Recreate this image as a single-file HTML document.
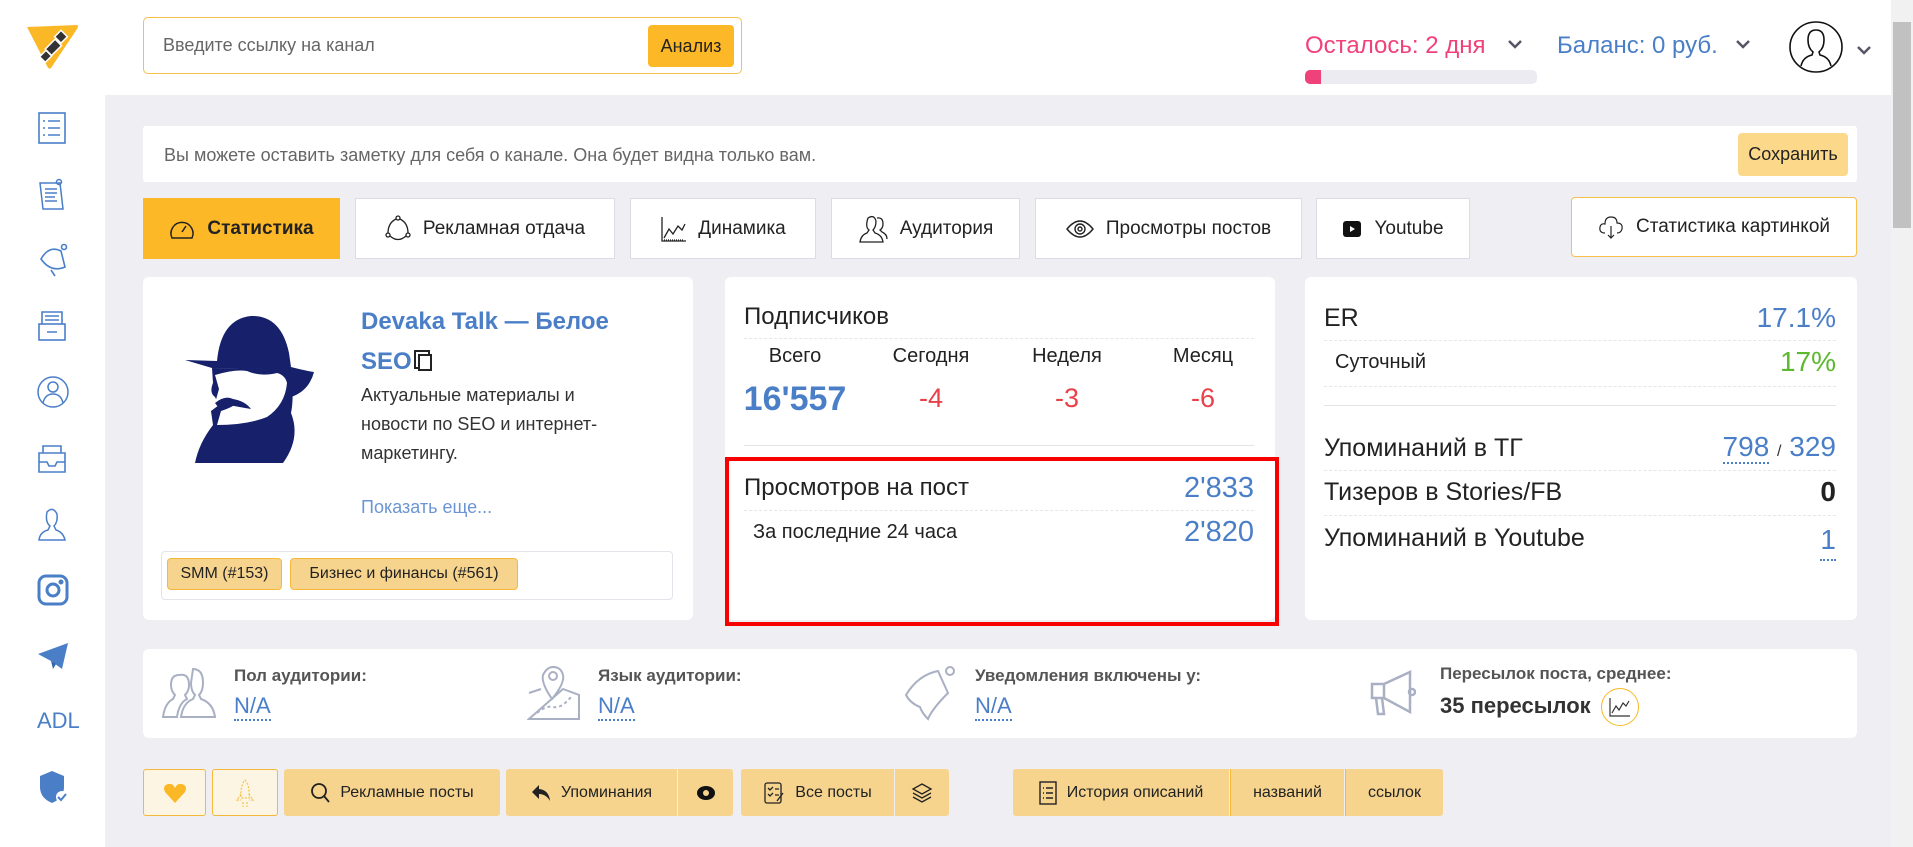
<!DOCTYPE html>
<html><head><meta charset="utf-8">
<style>
*{box-sizing:border-box;margin:0;padding:0}
body{width:1913px;height:847px;overflow:hidden;background:#eeeef3;font-family:"Liberation Sans",sans-serif;position:relative;color:#222}
.a{position:absolute}
.card{position:absolute;background:#fff;border-radius:6px}
.tab{position:absolute;top:198px;height:61px;background:#fff;border:1px solid #dcdce6;display:flex;align-items:center;justify-content:center;font-size:19px;color:#222;gap:12px}
.blue{color:#4a7fc8}
.red{color:#e8414a}
.dot{position:absolute;height:0;border-top:1px dashed #e6e6ea}
.btn{position:absolute;top:769px;height:47px;background:#f6d48e;display:flex;align-items:center;justify-content:center;font-size:16px;color:#222;gap:10px;border-radius:3px}
.lbl{font-size:17px;font-weight:bold;color:#555}
.na{font-size:22px;color:#4a7fc8;border-bottom:2px dotted #4a7fc8;display:inline-block;line-height:26px}
.si{position:absolute;left:37px}
</style></head><body>
<!-- sidebar -->
<div class="a" style="left:0;top:0;width:105px;height:847px;background:#fff"></div>
<svg class="a" style="left:25px;top:22px" width="55" height="50" viewBox="0 0 55 50"><path d="M2 5 L52 3 Q54 4 52 7 L26 46 Q24 48 22 44 Z" fill="#fbb826"/><g fill="#333" stroke="#fff" stroke-width="1.5"><rect x="32" y="10" width="9" height="9" transform="rotate(45 36 14)"/><rect x="24" y="18" width="9" height="14" transform="rotate(45 28 25)"/><rect x="17" y="30" width="8" height="9" transform="rotate(45 21 34)"/></g></svg>
<svg class="si" style="top:112px" width="30" height="32" viewBox="0 0 30 32" fill="none" stroke="#4a7fc8" stroke-width="1.6"><rect x="2" y="1" width="26" height="30"/><path d="M6 9h2M11 9h12M6 16h2M11 16h12M6 23h2M11 23h12"/></svg>
<svg class="si" style="top:178px" width="30" height="34" viewBox="0 0 30 34" fill="none" stroke="#4a7fc8" stroke-width="1.5"><path d="M3 5h20l3 26H6z"/><path d="M8 11h12M8 15h12M8 19h10M8 23h12"/><circle cx="22" cy="4" r="2.5"/></svg>
<svg class="si" style="top:243px" width="32" height="34" viewBox="0 0 32 34" fill="none" stroke="#4a7fc8" stroke-width="1.6"><path d="M4 16 Q12 2 24 8 L28 24 Q14 30 4 16Z"/><path d="M14 27 L18 33"/><circle cx="27" cy="4" r="2.5"/></svg>
<svg class="si" style="top:310px" width="30" height="32" viewBox="0 0 30 32" fill="none" stroke="#4a7fc8" stroke-width="1.6"><rect x="2" y="14" width="26" height="16"/><path d="M5 14V2h20v12M8 6h14M8 10h14M10 22h10"/></svg>
<svg class="si" style="top:375px" width="32" height="34" viewBox="0 0 32 34" fill="none" stroke="#4a7fc8" stroke-width="1.5"><circle cx="16" cy="17" r="15"/><circle cx="16" cy="12" r="5"/><path d="M6 28 Q8 19 16 19 Q24 19 26 28"/></svg>
<svg class="si" style="top:444px" width="30" height="30" viewBox="0 0 30 30" fill="none" stroke="#4a7fc8" stroke-width="1.6"><path d="M2 9h26v19H2z"/><path d="M2 18h8l2 4h6l2-4h8M6 9V2h18v7"/></svg>
<svg class="si" style="top:508px" width="30" height="34" viewBox="0 0 30 34" fill="none" stroke="#4a7fc8" stroke-width="1.5"><path d="M10 4 Q16 -2 20 6 Q21 14 17 18 L19 22 Q26 24 28 32 H2 Q3 24 11 22 L13 18 Q8 14 10 4Z"/></svg>
<svg class="si" style="top:574px" width="32" height="32" viewBox="0 0 32 32" fill="none" stroke="#4a7fc8" stroke-width="3"><rect x="2" y="2" width="28" height="28" rx="7"/><circle cx="16" cy="16" r="6"/><circle cx="24" cy="8" r="1" fill="#4a7fc8"/></svg>
<svg class="si" style="top:642px" width="32" height="28" viewBox="0 0 32 28"><path d="M1 12 L31 1 L25 27 L14 19 Z" fill="#4a7fc8"/><path d="M14 19 L16 27 L19 22" fill="#3766a8"/></svg>
<div class="a" style="left:37px;top:708px;font-size:22px;color:#4a7fc8">ADL</div>
<svg class="si" style="top:770px" width="34" height="34" viewBox="0 0 34 34"><path d="M3 6 L15 1 L27 6 V17 Q27 28 15 33 Q3 28 3 17Z" fill="#4a7fc8"/><circle cx="25" cy="27" r="6" fill="#fff"/><path d="M21 27l3 3 5-6" stroke="#4a7fc8" stroke-width="2" fill="none"/></svg>

<!-- header -->
<div class="a" style="left:105px;top:0;width:1786px;height:95px;background:#fff"></div>
<div class="a" style="left:1891px;top:0;width:22px;height:847px;background:#f1f1f1"></div>
<div class="a" style="left:1893px;top:22px;width:18px;height:206px;background:#c1c1c1"></div>
<div class="a" style="left:143px;top:17px;width:599px;height:57px;border:1px solid #f7c04a;border-radius:5px"></div>
<div class="a" style="left:163px;top:35px;font-size:18px;color:#666">Введите ссылку на канал</div>
<div class="a" style="left:648px;top:25px;width:86px;height:42px;background:#fdb827;border-radius:4px;font-size:18px;display:flex;align-items:center;justify-content:center">Анализ</div>
<div class="a" style="left:1305px;top:32px;font-size:24px;color:#f0427a">Осталось: 2 дня</div>
<div class="a" style="left:1305px;top:70px;width:232px;height:14px;background:#ebebf1;border-radius:5px"></div>
<div class="a" style="left:1305px;top:70px;width:16px;height:14px;background:#f0427a;border-radius:5px 0 0 5px"></div>
<div class="a" style="left:1557px;top:32px;font-size:24px;color:#4a7fc8">Баланс: 0 руб.</div>
<svg class="a" style="left:1507px;top:38px" width="16" height="12"><path d="M2 3l6 6 6-6" stroke="#556" stroke-width="2.5" fill="none"/></svg>
<svg class="a" style="left:1735px;top:38px" width="16" height="12"><path d="M2 3l6 6 6-6" stroke="#556" stroke-width="2.5" fill="none"/></svg>
<svg class="a" style="left:1788px;top:20px" width="56" height="54" viewBox="0 0 56 54" fill="none" stroke="#111" stroke-width="1.6"><ellipse cx="28" cy="27" rx="26" ry="25"/><path d="M28 10 Q20 10 20 20 Q20 28 25 32 L24 35 Q15 37 13 46 M28 10 Q36 10 36 20 Q36 28 31 32 L32 35 Q41 37 43 46"/></svg>
<svg class="a" style="left:1856px;top:44px" width="16" height="12"><path d="M2 3l6 6 6-6" stroke="#556" stroke-width="2.5" fill="none"/></svg>

<!-- note -->
<div class="card" style="left:143px;top:126px;width:1714px;height:56px;border-radius:3px"></div>
<div class="a" style="left:164px;top:145px;font-size:18px;color:#666">Вы можете оставить заметку для себя о канале. Она будет видна только вам.</div>
<div class="a" style="left:1738px;top:133px;width:110px;height:43px;background:#fcd98a;border-radius:4px;font-size:18px;display:flex;align-items:center;justify-content:center">Сохранить</div>

<!-- tabs -->
<div class="tab" style="left:143px;width:197px;background:#fdb827;border-color:#fdb827;font-weight:bold">
<svg width="26" height="24" viewBox="0 0 26 24" fill="none" stroke="#222" stroke-width="1.5"><path d="M3 21 A11 11 0 1 1 23 21Z"/><path d="M13 15l4-6"/></svg>Статистика</div>
<div class="tab" style="left:355px;width:260px"><svg width="26" height="28" viewBox="0 0 26 28" fill="none" stroke="#222" stroke-width="1.3"><circle cx="13" cy="3" r="2"/><circle cx="3" cy="20" r="2"/><circle cx="23" cy="20" r="2"/><path d="M11 4 Q3 8 3 18M15 4 Q23 8 23 18M5 21 Q13 28 21 21"/></svg>Рекламная отдача</div>
<div class="tab" style="left:630px;width:186px"><svg width="26" height="26" viewBox="0 0 26 26" fill="none" stroke="#222" stroke-width="1.3"><path d="M2 1v24h24M4 22l5-9 4 5 5-8 4 4 3-6"/><path d="M4 24h20" stroke-dasharray="1 1"/></svg>Динамика</div>
<div class="tab" style="left:831px;width:189px"><svg width="30" height="28" viewBox="0 0 30 28" fill="none" stroke="#222" stroke-width="1.3"><path d="M10 3 Q16 -1 18 6 Q18 12 15 15 L17 18 Q24 20 25 27 H2 Q3 20 9 18 L11 15 Q7 12 10 3Z"/><path d="M19 3 Q25 2 25 9 Q25 13 22 15 L24 17 Q29 19 29 24"/></svg>Аудитория</div>
<div class="tab" style="left:1035px;width:267px"><svg width="28" height="20" viewBox="0 0 28 20" fill="none" stroke="#222" stroke-width="1.4"><path d="M1 10 Q14 -6 27 10 Q14 26 1 10Z"/><circle cx="14" cy="10" r="5"/><circle cx="14" cy="10" r="2"/></svg>Просмотры постов</div>
<div class="tab" style="left:1316px;width:154px"><svg width="20" height="18" viewBox="0 0 20 18"><rect x="1" y="1" width="18" height="16" rx="3" fill="#111"/><path d="M8 6l5 3-5 3z" fill="#fff"/></svg>Youtube</div>
<div class="tab" style="left:1571px;width:286px;border:1px solid #f7c04a;border-radius:4px;top:197px;height:60px"><svg width="26" height="26" viewBox="0 0 26 26" fill="none" stroke="#222" stroke-width="1.2"><path d="M7 19 Q1 19 2 13 Q3 9 7 10 Q7 3 13 3 Q19 3 19 9 Q25 9 24 15 Q23 19 19 19"/><path d="M13 12v12M10 21l3 3 3-3"/></svg>Статистика картинкой</div>

<!-- card1 -->
<div class="card" style="left:143px;top:277px;width:550px;height:343px"></div>
<svg class="a" style="left:185px;top:313px" width="132" height="152" viewBox="0 0 132 152">
<path d="M0 47 L32 48 Q36 6 66 3 Q96 2 104 40 L106 54 Q122 58 129 59 Q124 78 106 84 L104 70 Q96 56 80 56 L27 55 Z" fill="#16206b"/>
<path d="M27 55 L104 56 Q110 80 106 100 Q116 125 98 150 L10 150 Q14 130 28 112 L26 98 L34 92 L30 84 Q24 80 28 70 Z" fill="#16206b"/>
<path d="M30 62 Q50 56 62 58 Q75 64 92 60 Q100 62 102 70 Q100 92 82 104 Q62 112 32 112 L36 98 Q48 94 52 90 L44 90 Q38 86 30 90 L34 76 Z" fill="#fff"/>
<path d="M30 90 Q40 82 48 86 Q60 88 66 96 Q54 94 44 92 L36 98Z" fill="#16206b"/>
</svg>
<div class="a" style="left:361px;top:302px;font-size:24px;font-weight:bold;color:#4a7fc8;line-height:40px;width:300px">Devaka Talk — Белое<br>SEO <span style="display:inline-block;width:14px;height:17px;border:2px solid #222;vertical-align:-2px;box-shadow:-3px -3px 0 -1px #fff,-3px -3px 0 1px #222"></span></div>
<div class="a" style="left:361px;top:381px;font-size:18px;color:#333;line-height:29px">Актуальные материалы и<br>новости по SEO и интернет-<br>маркетингу.</div>
<div class="a" style="left:361px;top:497px;font-size:18px;color:#6b95d4">Показать еще...</div>
<div class="a" style="left:161px;top:551px;width:512px;height:49px;border:1px solid #e3e3ea;border-radius:4px"></div>
<div class="a" style="left:167px;top:558px;width:115px;height:32px;background:#f6d48e;border:1px solid #f5b83a;border-radius:4px;font-size:16px;display:flex;align-items:center;justify-content:center">SMM (#153)</div>
<div class="a" style="left:290px;top:558px;width:228px;height:32px;background:#f6d48e;border:1px solid #f5b83a;border-radius:4px;font-size:16px;display:flex;align-items:center;justify-content:center">Бизнес и финансы (#561)</div>

<!-- card2 -->
<div class="card" style="left:725px;top:277px;width:550px;height:343px"></div>
<div class="a" style="left:744px;top:303px;font-size:24px">Подписчиков</div>
<div class="dot" style="left:744px;top:338px;width:510px"></div>
<div class="a" style="left:745px;top:345px;width:100px;text-align:center;font-size:20px">Всего</div>
<div class="a" style="left:881px;top:345px;width:100px;text-align:center;font-size:20px">Сегодня</div>
<div class="a" style="left:1017px;top:345px;width:100px;text-align:center;font-size:20px">Неделя</div>
<div class="a" style="left:1153px;top:345px;width:100px;text-align:center;font-size:20px">Месяц</div>
<div class="a blue" style="left:730px;top:380px;width:130px;text-align:center;font-size:34px;font-weight:bold">16'557</div>
<div class="a red" style="left:881px;top:383px;width:100px;text-align:center;font-size:27px">-4</div>
<div class="a red" style="left:1017px;top:383px;width:100px;text-align:center;font-size:27px">-3</div>
<div class="a red" style="left:1153px;top:383px;width:100px;text-align:center;font-size:27px">-6</div>
<div class="a" style="left:744px;top:445px;width:510px;height:1px;background:#e3e3e8"></div>
<div class="a" style="left:725px;top:457px;width:554px;height:169px;border:4px solid #f70000"></div>
<div class="a" style="left:744px;top:474px;font-size:24px">Просмотров на пост</div>
<div class="a blue" style="left:1100px;top:472px;width:154px;text-align:right;font-size:29px">2'833</div>
<div class="dot" style="left:744px;top:510px;width:510px"></div>
<div class="a" style="left:753px;top:521px;font-size:20px">За последние 24 часа</div>
<div class="a blue" style="left:1100px;top:516px;width:154px;text-align:right;font-size:29px">2'820</div>

<!-- card3 -->
<div class="card" style="left:1305px;top:277px;width:552px;height:343px"></div>
<div class="a" style="left:1324px;top:304px;font-size:25px">ER</div>
<div class="a blue" style="left:1700px;top:302px;width:136px;text-align:right;font-size:28px">17.1%</div>
<div class="dot" style="left:1324px;top:340px;width:512px"></div>
<div class="a" style="left:1335px;top:351px;font-size:20px">Суточный</div>
<div class="a" style="left:1700px;top:346px;width:136px;text-align:right;font-size:28px;color:#5cb82e">17%</div>
<div class="dot" style="left:1324px;top:386px;width:512px"></div>
<div class="a" style="left:1324px;top:405px;width:512px;height:1px;background:#e3e3e8"></div>
<div class="a" style="left:1324px;top:434px;font-size:25px">Упоминаний в ТГ</div>
<div class="a blue" style="left:1600px;top:431px;width:236px;text-align:right;font-size:28px"><span style="border-bottom:2px dotted #4a7fc8">798</span> <span style="font-size:16px;color:#333">/</span> 329</div>
<div class="dot" style="left:1324px;top:470px;width:512px"></div>
<div class="a" style="left:1324px;top:478px;font-size:25px">Тизеров в Stories/FB</div>
<div class="a" style="left:1700px;top:476px;width:136px;text-align:right;font-size:28px;font-weight:bold">0</div>
<div class="dot" style="left:1324px;top:515px;width:512px"></div>
<div class="a" style="left:1324px;top:524px;font-size:25px">Упоминаний в Youtube</div>
<div class="a blue" style="left:1700px;top:521px;width:136px;text-align:right;font-size:28px"><span style="border-bottom:2px dotted #4a7fc8;line-height:38px;display:inline-block">1</span></div>

<!-- info strip -->
<div class="card" style="left:143px;top:649px;width:1714px;height:89px"></div>
<svg class="a" style="left:161px;top:667px" width="56" height="52" viewBox="0 0 56 52" fill="none" stroke="#aab0c4" stroke-width="2"><path d="M32 2 Q42 2 42 16 Q42 24 38 28 L40 32 Q52 36 54 50 H20 Q22 36 32 32 L34 28 Q30 24 30 16Z" /><path d="M18 8 Q28 6 28 18 Q28 24 24 28 L26 32 Q18 36 16 50 H2 Q4 36 12 32 L14 28 Q10 24 10 18 Q10 8 18 8Z"/></svg>
<div class="a lbl" style="left:234px;top:666px">Пол аудитории:</div>
<div class="a" style="left:234px;top:693px"><span class="na">N/A</span></div>
<svg class="a" style="left:527px;top:665px" width="54" height="55" viewBox="0 0 54 55" fill="none" stroke="#aab0c4" stroke-width="2"><path d="M2 28 L14 24 M36 24 L52 30 V54 H2 Z"/><path d="M25 34 Q14 18 16 10 Q20 2 26 2 Q34 2 36 10 Q38 18 25 34Z"/><circle cx="26" cy="11" r="4"/><path d="M10 48 Q20 40 26 42 Q34 44 44 32" stroke-dasharray="3 3"/></svg>
<div class="a lbl" style="left:598px;top:666px">Язык аудитории:</div>
<div class="a" style="left:598px;top:693px"><span class="na">N/A</span></div>
<svg class="a" style="left:902px;top:665px" width="54" height="56" viewBox="0 0 54 56" fill="none" stroke="#aab0c4" stroke-width="2"><path d="M4 30 Q16 10 36 6 L46 28 Q30 44 26 54 Q20 48 18 42 Q8 38 4 30Z"/><circle cx="48" cy="6" r="4"/></svg>
<div class="a lbl" style="left:975px;top:666px">Уведомления включены у:</div>
<div class="a" style="left:975px;top:693px"><span class="na">N/A</span></div>
<svg class="a" style="left:1370px;top:670px" width="46" height="46" viewBox="0 0 46 46" fill="none" stroke="#aab0c4" stroke-width="2.5"><path d="M2 14h12v14H2z M14 14 L40 2 V42 L14 28"/><path d="M6 28 L8 44h6l-2-16"/><circle cx="42" cy="22" r="3"/></svg>
<div class="a lbl" style="left:1440px;top:664px">Пересылок поста, среднее:</div>
<div class="a" style="left:1440px;top:693px;font-size:22px;font-weight:bold;color:#333">35 пересылок</div>
<div class="a" style="left:1601px;top:688px;width:38px;height:38px;border:1px solid #fbb826;border-radius:50%;display:flex;align-items:center;justify-content:center"><svg width="22" height="20" viewBox="0 0 22 20" fill="none" stroke="#333" stroke-width="1.2"><path d="M1 1v18h20M3 16l4-7 3 4 4-7 3 3 3-5"/></svg></div>

<!-- bottom buttons -->
<div class="btn" style="left:143px;width:63px;background:#fdf5e3;border:1px solid #f5b83a"><svg width="24" height="22" viewBox="0 0 24 22"><path d="M12 21 L2 10 Q-1 4 5 2 Q10 1 12 6 Q14 1 19 2 Q25 4 22 10Z" fill="#fbb826"/></svg></div>
<div class="btn" style="left:212px;width:66px;background:#fdf5e3;border:1px solid #f5b83a"><svg width="22" height="30" viewBox="0 0 22 30" fill="none" stroke="#f5c04a" stroke-width="1.2" stroke-dasharray="2 1.5"><path d="M11 2 Q16 8 15 20 H7 Q6 8 11 2Z M7 16 L3 22 H7 M15 16 L19 22 H15 M9 24v5M13 24v5"/></svg></div>
<div class="btn" style="left:284px;width:216px"><svg width="20" height="22" viewBox="0 0 20 22" fill="none" stroke="#222" stroke-width="1.8"><circle cx="9" cy="9" r="7"/><path d="M14 14l5 6"/></svg>Рекламные посты</div>
<div class="btn" style="left:506px;width:171px;border-radius:3px 0 0 3px"><svg width="20" height="18" viewBox="0 0 20 18"><path d="M8 1 L1 8 L8 15 V10 Q15 10 19 17 Q18 6 8 5Z" fill="#222"/></svg>Упоминания</div>
<div class="btn" style="left:678px;width:55px;border-radius:0 3px 3px 0"><svg width="20" height="16" viewBox="0 0 20 16"><ellipse cx="10" cy="8" rx="9" ry="7" fill="#111"/><circle cx="10" cy="8" r="3" fill="#f6d48e"/></svg></div>
<div class="btn" style="left:741px;width:153px;border-radius:3px 0 0 3px"><svg width="22" height="24" viewBox="0 0 22 24" fill="none" stroke="#222" stroke-width="1.3"><rect x="2" y="2" width="16" height="20" rx="2"/><path d="M5 7l2 2 3-3M12 8h4M5 13l2 2 3-3M12 14h4M14 20l6-8"/></svg>Все посты</div>
<div class="btn" style="left:895px;width:54px;border-radius:0 3px 3px 0"><svg width="22" height="22" viewBox="0 0 22 22" fill="none" stroke="#222" stroke-width="1.3"><path d="M11 2 L20 7 L11 12 L2 7Z M2 11 L11 16 L20 11 M2 15 L11 20 L20 15"/></svg></div>
<div class="btn" style="left:1013px;width:216px;border-radius:3px 0 0 3px"><svg width="18" height="24" viewBox="0 0 18 24" fill="none" stroke="#222" stroke-width="1.4"><rect x="1" y="1" width="16" height="22"/><path d="M4 7h1M7 7h7M4 12h1M7 12h7M4 17h1M7 17h7"/></svg>История описаний</div>
<div class="btn" style="left:1230px;width:114px;border-radius:0;border-left:1px solid #f5b83a">названий</div>
<div class="btn" style="left:1345px;width:98px;border-radius:0 3px 3px 0;border-left:1px solid #f5b83a">ссылок</div>
</body></html>
